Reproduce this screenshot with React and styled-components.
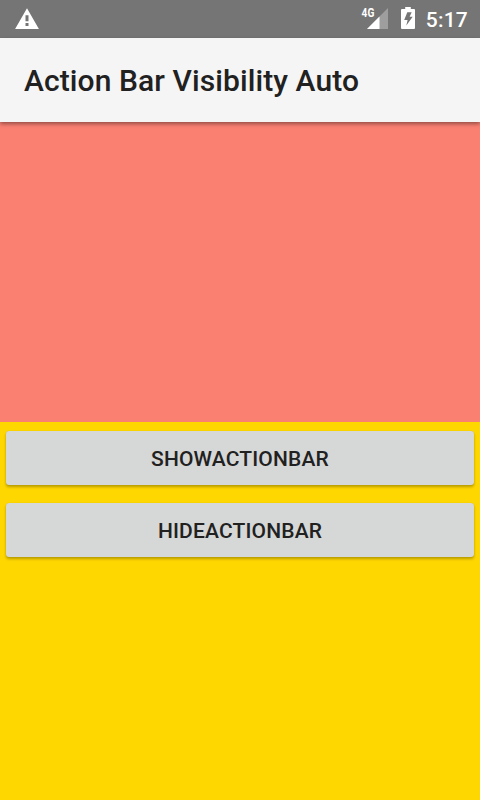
import React from 'react';
import styled, { createGlobalStyle } from 'styled-components';

const GlobalStyle = createGlobalStyle`
  body { margin: 0; background: #fff; font-family: Roboto, sans-serif; }
  * { box-sizing: border-box; }
`;

const Screen = styled.div`
  display: flex;
  flex-direction: column;
  width: 480px;
  height: 800px;
  overflow: hidden;
`;

const StatusBar = styled.header`
  display: flex;
  align-items: center;
  justify-content: space-between;
  flex: 0 0 38px;
  padding: 0 12px 0 15px;
  background: #757575;
  color: #fff;
`;

const StatusIcons = styled.div`
  display: flex;
  align-items: center;
`;

const Icon = styled.svg`
  display: block;
  margin-right: ${(p) => p.$gap || 0}px;
`;

const Clock = styled.time`
  height: 38px;
  padding-top: 1px;
  font-size: 21px;
  font-weight: 500;
  line-height: 38px;
  letter-spacing: 0.2px;
`;

const ActionBar = styled.div`
  display: flex;
  align-items: center;
  flex: 0 0 84px;
  padding: 2px 24px 0;
  background: #f5f5f5;
  box-shadow: 0 2px 4px rgba(0, 0, 0, 0.4);
  z-index: 1;
`;

const Title = styled.h1`
  margin: 0;
  font-size: 30px;
  font-weight: 500;
  line-height: 36px;
  letter-spacing: 0.09px;
  color: #212121;
`;

const TopPane = styled.section`
  flex: 0 0 300px;
  background: #fa8072;
`;

const BottomPane = styled.section`
  display: flex;
  flex: 1;
  flex-direction: column;
  gap: 18px;
  padding: 9px 6px;
  background: #ffd700;
`;

const Button = styled.button`
  flex: 0 0 54px;
  padding: 1px 0 0;
  border: 0;
  border-radius: 3px;
  background: #d6d7d7;
  box-shadow: 0 2px 3px rgba(0, 0, 0, 0.28), 0 0 1px rgba(0, 0, 0, 0.15);
  color: #212121;
  font: 500 21px/24px Roboto, sans-serif;
  letter-spacing: 0.16px;
  text-transform: uppercase;
`;

export default function App() {
  return (
    <>
      <GlobalStyle />
      <Screen>
        <StatusBar>
          <Icon width="24" height="38" viewBox="0 0 24 38" aria-label="Warning">
            <path
              fill="#fff"
              fillRule="evenodd"
              d="M12 8.3 23.9 29H.1ZM10.5 15.3v6h3v-6Zm0 7.7v3h3v-3Z"
            />
          </Icon>
          <StatusIcons>
            <Icon $gap={12} width="27" height="38" viewBox="0 0 27 38" aria-label="Mobile signal">
              <path fill="#fff" fillOpacity="0.3" d="M27 8v21H6Z" />
              <path fill="#fff" d="M18.5 16.5V29H6Z" />
              <text
                x="0.6"
                y="17.1"
                fill="#fff"
                fontFamily="Roboto, sans-serif"
                fontSize="12.5"
                fontWeight="700"
                textLength="12.7"
                lengthAdjust="spacingAndGlyphs"
              >
                4G
              </text>
            </Icon>
            <Icon $gap={11} width="15" height="38" viewBox="0 0 15 38" aria-label="Battery charging">
              <path
                fill="#fff"
                fillRule="evenodd"
                d="M5.2 7h5.6v2H14q1 0 1 1v18q0 1-1 1H2q-1 0-1-1V10q0-1 1-1h3.2ZM7.3 12.3 4.2 20H7.6L6.3 25.4 12.7 16.8H9.6L11.7 12.3Z"
              />
            </Icon>
            <Clock>5:17</Clock>
          </StatusIcons>
        </StatusBar>
        <ActionBar>
          <Title>Action Bar Visibility Auto</Title>
        </ActionBar>
        <TopPane />
        <BottomPane>
          <Button type="button">ShowActionBar</Button>
          <Button type="button">HideActionBar</Button>
        </BottomPane>
      </Screen>
    </>
  );
}
